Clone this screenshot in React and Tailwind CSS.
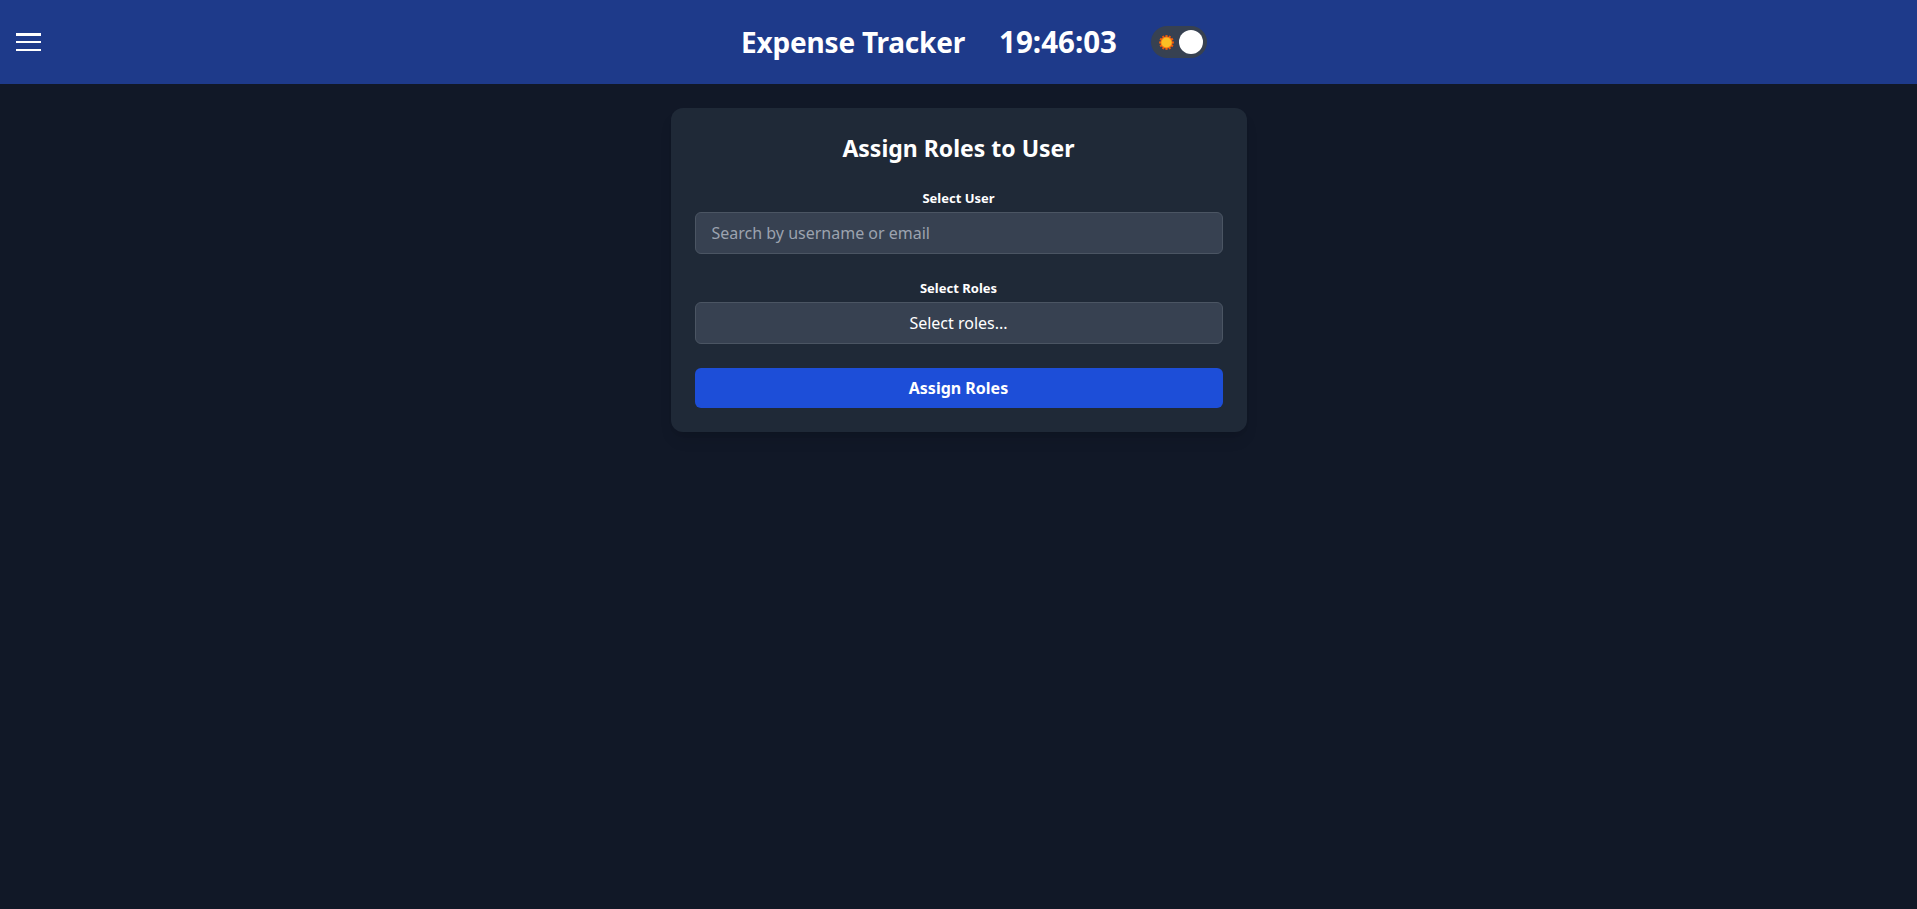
import React, { useState } from 'react';

const Sun = () => (
  <svg width="17" height="17" viewBox="0 0 16 16">
    {[0, 30, 60, 90, 120, 150].map((a) => (
      <rect key={a} x="7" y="1" width="2" height="14" fill="#ea580c" transform={`rotate(${a} 8 8)`} />
    ))}
    <circle cx="8" cy="8" r="5.6" fill="#f97316" />
    <circle cx="8" cy="8" r="4.8" fill="#fbbf24" />
  </svg>
);

const App = () => {
  const [search, setSearch] = useState('');

  return (
    <div className="min-h-screen bg-[#111827] text-white font-['Segoe_UI','Noto_Sans',sans-serif]">
      {/* Header */}
      <header className="h-[84px] bg-[#1e3a8a] flex items-center px-4">
        <button className="w-[25px] h-[18px] flex flex-col justify-between">
          <span className="block h-[2.5px] w-full bg-white" />
          <span className="block h-[2.5px] w-full bg-white" />
          <span className="block h-[2.5px] w-full bg-white" />
        </button>
        <div className="flex-1 flex justify-center items-center">
          <div className="flex items-center gap-[34px] pl-[6px]">
            <h1 className="text-[28px] font-bold tracking-[-0.2px]">Expense Tracker</h1>
            <span className="text-[29.5px] font-bold">19:46:03</span>
            <div className="w-14 h-8 rounded-full bg-[#374151] flex items-center justify-between px-1">
              <span className="ml-[3px] flex"><Sun /></span>
              <span className="w-6 h-6 rounded-full bg-white" />
            </div>
          </div>
        </div>
      </header>

      {/* Card */}
      <main className="flex justify-center pt-6">
        <div className="w-full max-w-xl bg-[#1f2937] rounded-xl p-6 shadow-lg">
          <h2 className="text-[23px] leading-8 font-bold text-center mb-6">Assign Roles to User</h2>

          <div className="mb-6">
            <label className="block text-center text-[13px] font-bold mb-1 leading-5">Select User</label>
            <input
              value={search}
              onChange={(e) => setSearch(e.target.value)}
              placeholder="Search by username or email"
              className="w-full h-[42px] px-4 rounded-md bg-[#374151] border border-[#4b5563] text-base text-white placeholder-[#9ca3af] outline-none"
            />
          </div>

          <div className="mb-6">
            <label className="block text-center text-[13px] font-bold mb-1 leading-5">Select Roles</label>
            <button className="w-full h-[42px] rounded-md bg-[#374151] border border-[#4b5563] text-base text-white">
              Select roles...
            </button>
          </div>

          <button className="w-full h-10 rounded-md bg-[#1d4ed8] text-base font-bold text-white">
            Assign Roles
          </button>
        </div>
      </main>
    </div>
  );
};

export default App;
